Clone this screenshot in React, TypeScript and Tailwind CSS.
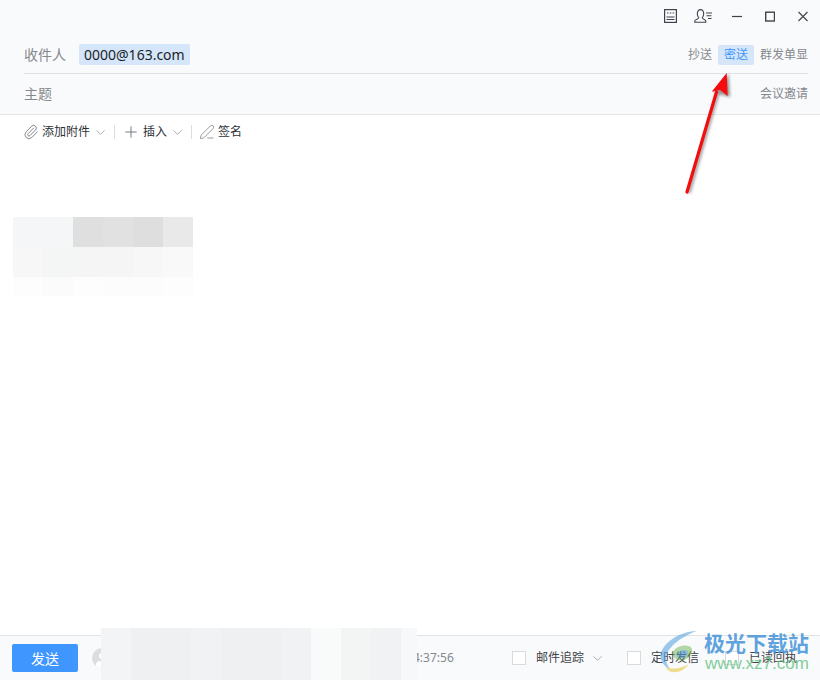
import { Paperclip, Plus, ChevronDown, PenLine } from "lucide-react";

const font = { fontFamily: '"Noto Sans", "Noto Sans CJK SC", sans-serif' };

const top = ["#f4f6f8", "#f4f6f8", "#dfdfdf", "#e0e1e0", "#dedede", "#e9e9e9"];
const mid = ["#f7f7f7", "#f4f6f5", "#f5f5f5", "#f5f5f5", "#f7f7f7", "#f9f9f9"];
const low = ["#fdfdfd", "#fbfbfb", "#fcfdfc", "#fcfcfc", "#fcfcfc", "#fdfdfd"];

const barTop = ["#f3f4f5", "#eff0f1", "#eff0f1", "#f1f2f4", "#eff0f1", "#eff0f1", "#f1f2f3", "#f9fafa", "#f3f5f5", "#f0f2f3", "#f6f8f9"];

function Check({ label, arrow, cls }: { label: string; arrow?: boolean; cls: string }) {
  return (
    <div className={`flex items-center ${cls}`}>
      <span className="w-[14px] h-[14px] border border-[#d9dadc] bg-white mr-[10px]" />
      <span className="text-[12px] text-[#3f4247]">{label}</span>
      {arrow && <ChevronDown className="w-[15px] h-[15px] ml-[6px] text-[#9a9da3]" strokeWidth={1.3} />}
    </div>
  );
}

export default function App() {
  return (
    <div className="relative w-[820px] h-[680px] bg-white overflow-hidden flex flex-col" style={font}>
      <header className="bg-[#f9fafc] h-[115px] border-b border-[#e4e5e7] shrink-0 flex flex-col">
        <div className="h-[36px] flex items-start justify-end text-[#3f444b] pt-[9px] pr-[12px]">
          <svg width="13" height="14" viewBox="0 0 13 14" fill="none" stroke="currentColor" strokeWidth="1.2" className="mr-[17px]">
            <rect x="0.6" y="0.6" width="11.8" height="12.8" />
            <path d="M3 4h1.5M5.8 4h1.5M8.6 4h1.5M2.5 8h8M2.5 10.5h8" />
          </svg>
          <svg width="18" height="14" viewBox="0 0 18 14" fill="none" stroke="currentColor" strokeWidth="1.1" className="mr-[20px]">
            <path d="M.8 13.2h11v-1.4c0-1.2-3.4-1.5-3.6-3 1-1 1.5-2 1.5-4 0-2.400-1.200-4.200-3.200-4.200S3.300 2.400 3.300 4.800c0 2 .5 3 1.500 4-.2 1.500-4 1.800-4 3z" />
            <path d="M12 4h6M12.500 6.800h5M14 9.500h3.500" />
          </svg>
          <svg width="10" height="14" viewBox="0 0 10 14" fill="none" stroke="currentColor" strokeWidth="1.2" className="mr-[23px]">
            <path d="M0 7.500h10" />
          </svg>
          <svg width="10" height="14" viewBox="0 0 10 14" fill="none" stroke="currentColor" strokeWidth="1.400" className="mr-[23px]">
            <rect x="0.7" y="3.200" width="8.800" height="8.800" />
          </svg>
          <svg width="10" height="14" viewBox="0 0 10 14" fill="none" stroke="currentColor" strokeWidth="1.100">
            <path d="M.5 3l9 9M9.500 3l-9 9" />
          </svg>
        </div>
        <div className="h-[38px] ml-[24px] mr-[12px] border-b border-[#e2e3e5] flex items-center">
          <span className="text-[14px] text-[#85888d] w-[55px]">收件人</span>
          <span className="h-[21px] px-[5px] bg-[#d5e6fa] rounded-[2px] flex items-center text-[14px] text-[#1c1f24]">0000@163.com</span>
          <div className="ml-auto flex items-center text-[12px] text-[#85888d]">
            <span className="mr-[6px]">抄送</span>
            <span className="w-[36px] h-[20px] bg-[#d5e6fa] rounded-[2px] text-[#3f95f6] flex items-center justify-center mr-[6px]">密送</span>
            <span>群发单显</span>
          </div>
        </div>
        <div className="flex-1 ml-[24px] mr-[12px] flex items-center justify-between">
          <span className="text-[14px] text-[#85888d] -mt-[2px]">主题</span>
          <span className="text-[12px] text-[#85888d]">会议邀请</span>
        </div>
      </header>

      <div className="h-[34px] shrink-0 pl-[23px] flex items-center text-[12px] text-[#2d3136]">
        <Paperclip className="w-[16px] h-[16px] text-[#7d8085] mr-[3px]" strokeWidth={1.4} />
        <span>添加附件</span>
        <ChevronDown className="w-[15px] h-[15px] ml-[3px] text-[#9a9da3]" strokeWidth={1.3} />
        <span className="w-px h-[14px] bg-[#dcdde0] ml-[6px] mr-[7px]" />
        <Plus className="w-[18px] h-[18px] text-[#5f6267] mr-[3px]" strokeWidth={1.1} />
        <span>插入</span>
        <ChevronDown className="w-[15px] h-[15px] ml-[3px] text-[#9a9da3]" strokeWidth={1.3} />
        <span className="w-px h-[14px] bg-[#dcdde0] ml-[6px] mr-[7px]" />
        <PenLine className="w-[16px] h-[16px] text-[#7d8085] mr-[3px]" strokeWidth={1.2} />
        <span>签名</span>
      </div>

      <main className="flex-1 pl-[13px] pt-[68px]">
        <div className="grid grid-cols-[repeat(6,30px)] grid-rows-[30px_30px_19px] w-[180px]">
          {[...top, ...mid, ...low].map((c, i) => (
            <div key={i} style={{ backgroundColor: c }} />
          ))}
        </div>
      </main>

      <footer className="h-[45px] shrink-0 bg-[#f9fafc] border-t border-[#e2e3e5] flex items-center pl-[12px]">
        <button className="w-[66px] h-[28px] bg-[#4096ff] rounded-[2px] text-white text-[14px] flex items-center justify-center">发送</button>
        <span className="relative w-[20px] h-[20px] rounded-full bg-[#dcdde0] ml-[14px] overflow-hidden">
          <span className="absolute left-[7px] top-[5px] w-[6px] h-[6px] rounded-full bg-white" />
          <span className="absolute left-[4px] top-[13px] w-[12px] h-[8px] rounded-full bg-white" />
        </span>
        <span className="ml-[301px] text-[12px] text-[#85888d] w-[41px]">4:37:56</span>
        <Check label="邮件追踪" arrow cls="ml-[58px]" />
        <Check label="定时发信" cls="ml-[22px]" />
        <Check label="已读回执" cls="ml-[26px]" />
      </footer>

      <div className="absolute left-[101px] top-[628px] w-[316px] h-[52px] grid grid-cols-[repeat(10,30px)_16px]">
        {barTop.map((c, i) => (
          <div key={i} style={{ backgroundColor: c }} />
        ))}
      </div>

      <svg className="absolute left-[680px] top-[70px]" width="60" height="126" viewBox="0 0 60 126">
        <g opacity="0.5" transform="translate(2 1)" style={{ filter: "blur(1.5px)" }}>
          <path d="M7 122 L36 22" stroke="#333" strokeWidth="3" />
          <path d="M46.700 3 L32 22 L48 26z" fill="#333" />
        </g>
        <path d="M7 122 L36.500 22" stroke="#f50d0d" strokeWidth="3.200" strokeLinecap="round" />
        <path d="M46.700 3 L31.700 21.700 L40 20 L47.700 26z" fill="#f50d0d" />
      </svg>

      <div className="absolute left-[660px] top-[628px] w-[160px] h-[52px]">
        <svg className="absolute left-0 top-0 opacity-70" width="46" height="46" viewBox="0 0 52 52" fill="none">
          <path d="M42 3C24 4 6 14 1 28c-2 8 3 15 10 18-6-8-6-17 3-26C22 12 32 7 42 3z" fill="#5aa5de" opacity="0.85" />
          <path d="M14 28c4-8 14-10 20-7 5 4 2 12-6 15-6 2-14-1-14-8z" fill="#6ab04c" opacity="0.7" />
          <path d="M19 29c3-4 9-5 12-3 2 3-1 7-5 8-4 1-8-2-7-5z" fill="#4a90d9" opacity="0.75" />
          <path d="M6 44c8 3 18 2 26-3-3 6-10 9-16 9-4 0-8-2-10-6z" fill="#e8c53c" opacity="0.8" />
        </svg>
        <span className="absolute left-[44px] top-[1px] text-[21px] leading-[26px] font-bold text-[#4a96d8]/90 whitespace-nowrap" style={{ fontFamily: '"Noto Sans CJK SC", sans-serif' }}>极光下载站</span>
        <span className="absolute left-[45px] top-[26px] text-[17px] leading-[20px] text-[#5fc07c]/80 whitespace-nowrap" style={{ fontFamily: '"Liberation Sans", sans-serif' }}>www.xz7.com</span>
      </div>
    </div>
  );
}
